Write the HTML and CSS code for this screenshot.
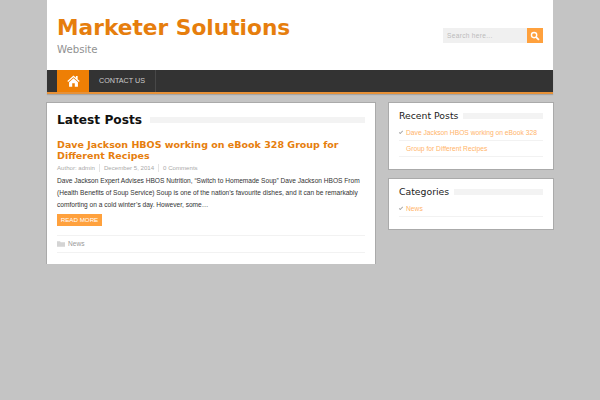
FILE: index.html
```html
<!DOCTYPE html>
<html lang="en">
<head>
    <meta charset="UTF-8">
    <meta name="viewport" content="width=device-width, initial-scale=1.0">
    <title>Marketer Solutions</title>
    <link rel="stylesheet" href="styles.css">
</head>
<body>
    <div class="wrapper">
        <header class="site-header">
            <div class="branding">
                <h1>Marketer Solutions</h1>
                <p>Website</p>
            </div>
            <form class="search">
                <div class="search-input">Search here...</div>
                <div class="search-button">
                    <svg width="10" height="10" viewBox="0 0 11 11">
                        <circle cx="4.5" cy="4.5" r="2.9" fill="none" stroke="#fff" stroke-width="1.5"/>
                        <path d="M6.7 6.7L9.8 9.8" stroke="#fff" stroke-width="2"/>
                    </svg>
                </div>
            </form>
        </header>

        <nav class="main-nav">
            <a class="home-link" href="#">
                <svg width="13" height="12" viewBox="0 0 14 13">
                    <path fill="#fff" d="M7 0.5L0.3 6.6L1.2 7.6L7 2.4L12.8 7.6L13.7 6.6L11.5 4.6V1H9.6V2.9Z"/>
                    <path fill="#fff" d="M7 3.6L2.2 7.9V12.7H5.6V9H8.4V12.7H11.8V7.9Z"/>
                </svg>
            </a>
            <a class="nav-link" href="#">CONTACT US</a>
        </nav>

        <div class="columns">
            <main class="card content">
                <div class="section-title">
                    <h2>Latest Posts</h2>
                    <span class="title-bar"></span>
                </div>
                <article>
                    <h3><a href="#">Dave Jackson HBOS working on eBook 328 Group for Different Recipes</a></h3>
                    <div class="post-meta">
                        <span>Author: admin</span>
                        <span>December 5, 2014</span>
                        <span>0 Comments</span>
                    </div>
                    <p class="excerpt">Dave Jackson Expert Advises HBOS Nutrition, “Switch to Homemade Soup” Dave Jackson HBOS From (Health Benefits of Soup Service) Soup is one of the nation’s favourite dishes, and it can be remarkably comforting on a cold winter’s day. However, some…</p>
                    <a class="read-more" href="#">READ MORE</a>
                    <div class="post-cats">
                        <svg width="8" height="6" viewBox="0 0 13 9">
                            <path fill="#d4d4d4" d="M0 0H5L6 1.5H13V9H0Z"/>
                        </svg>
                        <span>News</span>
                    </div>
                </article>
            </main>

            <aside class="sidebar">
                <section class="card widget">
                    <div class="widget-title">
                        <h4>Recent Posts</h4>
                        <span class="title-bar"></span>
                    </div>
                    <ul>
                        <li><a href="#">Dave Jackson HBOS working on eBook 328 Group for Different Recipes</a></li>
                    </ul>
                </section>
                <section class="card widget">
                    <div class="widget-title">
                        <h4>Categories</h4>
                        <span class="title-bar"></span>
                    </div>
                    <ul>
                        <li><a href="#">News</a></li>
                    </ul>
                </section>
            </aside>
        </div>
    </div>
</body>
</html>
```

FILE: styles.css
```css
body {
    font-family: "Liberation Sans", Arial, sans-serif;
    margin: 0;
    padding: 0;
    background-color: #c4c4c4;
    color: #333;
}

a {
    text-decoration: none;
}

.wrapper {
    width: 506px;
    margin: 0 auto;
}

.site-header {
    background-color: #fff;
    height: 70px;
    padding: 0 10px;
    box-sizing: border-box;
    display: flex;
    justify-content: space-between;
    align-items: flex-start;
}

.branding h1 {
    font-family: "DejaVu Sans", sans-serif;
    font-size: 21.7px;
    line-height: 30px;
    font-weight: bold;
    color: #e67e0d;
    margin: 13px 0 0;
}

.branding p {
    font-family: "DejaVu Sans", sans-serif;
    font-size: 10.2px;
    line-height: 14px;
    color: #919191;
    margin: 0;
}

.search {
    display: flex;
    margin-top: 28px;
}

.search-input {
    width: 80px;
    height: 15px;
    background-color: #f0f0f0;
    color: #bbb;
    font-size: 6.6px;
    line-height: 15px;
    padding-left: 4px;
    letter-spacing: 0.3px;
}

.search-button {
    width: 16px;
    height: 15px;
    background-color: #ffa13d;
    display: flex;
    justify-content: center;
    align-items: center;
}

.main-nav {
    background-color: #333;
    height: 22px;
    border-bottom: 2px solid #e69138;
    box-shadow: 0 1px 1px rgba(0, 0, 0, 0.15);
    padding-left: 10px;
    display: flex;
}

.home-link {
    width: 32px;
    background-color: #ee7f05;
    display: flex;
    justify-content: center;
    align-items: center;
}

.nav-link {
    color: #ccc;
    font-size: 7.2px;
    line-height: 22px;
    padding: 0 10px;
    border-right: 1px solid #484848;
}

.columns {
    display: flex;
    justify-content: space-between;
    align-items: flex-start;
    margin-top: 9px;
}

.card {
    background-color: #fff;
    box-shadow: 0 0 0 1px #aaa;
    box-sizing: border-box;
}

.content {
    width: 328px;
    height: 161px;
    padding: 8px 10px;
}

.section-title,
.widget-title {
    display: flex;
    align-items: center;
    gap: 8px;
}

.widget-title {
    gap: 5px;
}

.title-bar {
    flex: 1;
    height: 6px;
    background-color: #f3f3f3;
}

.section-title h2 {
    font-family: "DejaVu Sans", sans-serif;
    font-size: 12.2px;
    line-height: 18px;
    font-weight: bold;
    color: #111;
    margin: 0;
}

article h3 {
    font-family: "DejaVu Sans", sans-serif;
    font-size: 9.5px;
    line-height: 11px;
    font-weight: bold;
    margin: 10px 0 0;
}

article h3 a {
    color: #e67e0d;
}

.post-meta {
    display: flex;
    margin-top: 3px;
    font-size: 6.1px;
    line-height: 8px;
    color: #aaa;
}

.post-meta span {
    padding-right: 4px;
    margin-right: 4px;
    border-right: 1px solid #e4e4e4;
}

.post-meta span:last-child {
    border-right: none;
}

.excerpt {
    font-size: 6.6px;
    line-height: 12.2px;
    color: #333;
    margin: 3px 0 0;
}

.read-more {
    display: block;
    width: 45px;
    height: 12px;
    margin-top: 2px;
    background-color: #ffa13d;
    color: #fff;
    font-size: 6.2px;
    line-height: 12px;
    text-align: center;
}

.post-cats {
    display: flex;
    align-items: center;
    gap: 3px;
    margin-top: 9px;
    height: 16px;
    border-top: 1px solid #f2f2f2;
    border-bottom: 1px solid #f2f2f2;
    font-size: 6.6px;
    color: #999;
}

.sidebar {
    width: 164px;
    display: flex;
    flex-direction: column;
    gap: 10px;
}

.widget {
    padding: 6px 10px 0;
}

.widget:first-child {
    height: 66px;
}

.widget:last-child {
    height: 50px;
}

.widget-title h4 {
    font-family: "DejaVu Sans", sans-serif;
    font-size: 9.3px;
    line-height: 14px;
    font-weight: normal;
    color: #222;
    margin: 0;
}

.widget ul {
    list-style: none;
    margin: 2px 0 0;
    padding: 0;
}

.widget li {
    position: relative;
    font-size: 6.7px;
    line-height: 16px;
    background-image: repeating-linear-gradient(transparent 0, transparent 15px, #f2f2f2 15px, #f2f2f2 16px);
}

.widget li::before {
    content: "";
    position: absolute;
    left: 0;
    top: 6px;
    width: 3px;
    height: 1px;
    border-left: 1px solid #aaa;
    border-bottom: 1px solid #aaa;
    transform: rotate(-45deg);
}

.widget li a {
    color: #ffb46a;
    display: block;
    padding-left: 7px;
}
```
